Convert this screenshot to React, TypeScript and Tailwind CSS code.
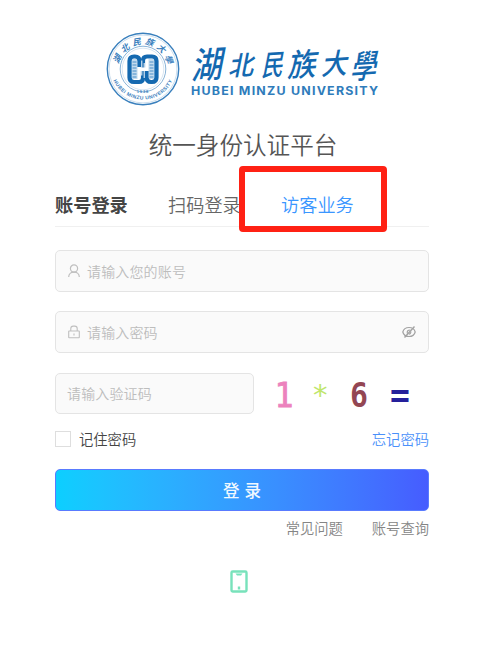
import React from 'react';

const GLYPHS = [
  { ch: '湖', x: 191, y: 79, w: 0.82, size: 37 },
  { ch: '北', x: 228, y: 76, w: 0.92, size: 27 },
  { ch: '民', x: 261, y: 76, w: 0.74, size: 29 },
  { ch: '族', x: 287, y: 77, w: 0.88, size: 32 },
  { ch: '大', x: 321, y: 75, w: 0.88, size: 29 },
  { ch: '學', x: 350, y: 79, w: 0.78, size: 33 },
];

function Brand() {
  return (
    <svg className="block h-[90px] w-[486px]" viewBox="0 22 486 90" fill="none">
      <defs>
        <path id="sealTop" d="M118.500 69a24.500 24.500 0 0 1 49 0" />
        <path id="sealBottom" d="M110.500 67a32.500 32.500 0 0 0 65 0" />
      </defs>
      <g stroke="#3a80bd">
        <circle cx="143" cy="69" r="35.700" strokeWidth="1.400" />
        <circle cx="143" cy="69" r="33.900" strokeWidth="0.500" opacity="0.500" />
        <circle cx="143" cy="69" r="22.800" strokeWidth="1" opacity="0.600" />
        <circle cx="143" cy="69" r="20.800" strokeWidth="0.500" opacity="0.400" />
      </g>
      <g fill="#3a80bd" fontFamily="'Noto Sans CJK SC', sans-serif">
        <text fontSize="8.500" fontStyle="italic" fontWeight="700" textAnchor="middle" letterSpacing="3.200">
          <textPath href="#sealTop" startOffset="52%">湖北民族大學</textPath>
        </text>
        <text fontSize="5" fontWeight="700" fontFamily="'Liberation Sans', sans-serif" textAnchor="middle" letterSpacing="0.450">
          <textPath href="#sealBottom" startOffset="50%">HUBEI MINZU UNIVERSITY</textPath>
        </text>
        <text x="143" y="92.500" fontSize="4" fontWeight="700" fontFamily="'Liberation Sans', sans-serif" textAnchor="middle" letterSpacing="0.900">1938</text>
      </g>
      <g fill="#c3dbee">
        <rect x="131" y="59" width="6.500" height="20" />
        <rect x="148.500" y="59" width="6.500" height="20" />
      </g>
      <path d="M132.500 62h4M132.500 65h4M132.500 68h4M132.500 71h4M132.500 74h4M132.500 77h4M149.500 62h4M149.500 65h4M149.500 68h4M149.500 71h4M149.500 74h4M149.500 77h4" stroke="#4a8fc8" strokeWidth="1" />
      <g stroke="#1469b0" strokeWidth="4.200">
        <path d="M139.500 67V61q0-4.500-4.500-4.500h-1q-4.500 0-4.500 4.500v16.500q0 4.500 4.500 4.500h5q4 0 4-4v-7" />
        <path d="M146.500 71v6.500q0 4.500 4.500 4.500h1q4.500 0 4.500-4.500V61q0-4.500-4.500-4.500h-5q-4 0-4 4v7" />
      </g>
      <path d="M141.800 60.500v15M144.200 63v15M140 69.200h6.500" stroke="#fff" strokeWidth="1" />
      <g fill="#1469b0" fontFamily="'Noto Sans CJK SC', sans-serif" fontWeight="500">
        {GLYPHS.map((g) => (
          <text key={g.ch} fontSize={g.size} transform={`translate(${g.x} ${g.y}) skewX(-15) rotate(-4) scale(${g.w} 1)`}>
            {g.ch}
          </text>
        ))}
      </g>
      <text transform="translate(191 94.800) scale(1.100 1)" fill="#2f7cbb" fontFamily="Inter, sans-serif" fontSize="11.300" fontWeight="700" textLength="170" lengthAdjust="spacing">
        HUBEI MINZU UNIVERSITY
      </text>
    </svg>
  );
}

function UserIcon() {
  return (
    <svg className="h-[14px] w-[12px] shrink-0" viewBox="0 0 12 14" fill="none" stroke="#bfbfbf" strokeWidth="1.200">
      <circle cx="6" cy="4.500" r="3.600" />
      <path d="M.7 13c0-3 2.300-4.900 5.300-4.900s5.300 1.900 5.300 4.900" />
    </svg>
  );
}

function LockIcon() {
  return (
    <svg className="h-[14px] w-[12px] shrink-0" viewBox="0 0 12 14" fill="none" stroke="#bfbfbf" strokeWidth="1.100">
      <rect x=".7" y="6" width="10.600" height="6.800" rx=".5" />
      <path d="M2.800 6V3.500q0-2.400 2.400-2.400h1.600q2.400 0 2.400 2.400V6M6 8.500v2" />
    </svg>
  );
}

function EyeOffIcon() {
  return (
    <svg className="h-[12px] w-[14px] shrink-0" viewBox="0 0 14 12" fill="none" stroke="#a3a3a3" strokeWidth="1.200">
      <path d="M.8 6q1.200-4.500 6.200-4.500T13.200 6Q12 10.500 7 10.500T.8 6Z" />
      <path d="M5.500 7.800Q4.300 4 8.300 4M8.800 5.500q.2 2.500-2 2.600" />
      <path d="M2.500 11.500 12.500.5" strokeWidth="1.400" />
    </svg>
  );
}

const FIELD = 'flex items-center rounded-[5px] border border-[#e4e4e4] bg-[#fafafa] text-[14px] tracking-[0.150px] text-[#bdbdbd]';

export default function App() {
  return (
    <main className="h-[657px] w-[486px] overflow-hidden bg-white pt-[22px] font-['Noto_Sans_CJK_SC',sans-serif] font-[350]">
      <Brand />
      <h1 className="mt-[16px] h-8 text-center text-[23.600px] leading-8 text-[#555]">统一身份认证平台</h1>

      <div className="relative ml-[55px] mt-[23px] w-[374px]">
        <nav className="flex h-[44px] border-b border-[#f0f0f0] text-[18.200px] leading-[42px]">
          <span className="w-[113px] font-bold text-[#444]">账号登录</span>
          <span className="w-[113px] text-[#666]">扫码登录</span>
          <span className="text-[#3a96ff]">访客业务</span>
        </nav>
        <div className="absolute -top-[17px] left-[184px] h-[66px] w-[148px] rounded-[4px] border-[6px] border-[#ff2114]" />

        <div className={`${FIELD} mt-[23px] h-[42px] gap-[7px] px-3`}>
          <UserIcon />
          <span>请输入您的账号</span>
        </div>
        <div className={`${FIELD} mt-[19px] h-[42px] gap-[7px] px-3`}>
          <LockIcon />
          <span className="flex-1">请输入密码</span>
          <EyeOffIcon />
        </div>
        <div className="mt-5 flex h-[41px]">
          <div className={`${FIELD} w-[199px] px-[11px]`}>请输入验证码</div>
          <svg className="ml-[16px] h-[41px] w-[150px]" viewBox="270 373 150 41" fontFamily="'DejaVu Sans Mono', monospace" fontWeight="700">
            <text x="274.500" y="406.500" fontSize="33" fontWeight="400" fill="#ec82bd" stroke="#ec82bd" strokeWidth=".8" textLength="19" lengthAdjust="spacingAndGlyphs">1</text>
            <text x="311.500" y="405" fontSize="29" fontWeight="400" fill="#c0e66b">*</text>
            <text x="350" y="406.500" fontSize="33" fill="#934653" textLength="18" lengthAdjust="spacingAndGlyphs">6</text>
            <text x="390" y="406.500" fontSize="33" fill="#25209b">=</text>
          </svg>
        </div>

        <div className="mt-[15px] flex h-5 items-center text-[14.300px] leading-5">
          <span className="h-4 w-4 border border-[#dedede] bg-white" />
          <span className="ml-2 text-[#444]">记住密码</span>
          <span className="ml-auto text-[#4a90fa]">忘记密码</span>
        </div>

        <button className="mt-[20px] flex h-[42px] w-full items-center justify-center gap-[5px] rounded-[5px] border border-[#597bff] bg-linear-to-r from-[#0bcfff] to-[#465cff] text-[16.500px] font-medium text-[#f0f8ff]">
          <span>登</span>
          <span>录</span>
        </button>

        <div className="mt-[7px] flex h-5 justify-end gap-[29px] text-[14.300px] leading-5 text-[#858585]">
          <span>常见问题</span>
          <span>账号查询</span>
        </div>

        <div className="mt-[32px] flex justify-center pr-[6px]">
          <svg className="h-[23px] w-[18px]" viewBox="0 0 18 23" fill="none" stroke="#78e2bb" strokeWidth="2.400">
            <rect x="1.500" y="1.500" width="15" height="20" rx="1.200" />
            <path d="M5.500 3.500h7l-1.500 2H7Z" fill="#78e2bb" stroke="none" />
            <path d="M9 16.500v3" />
          </svg>
        </div>
      </div>
    </main>
  );
}
